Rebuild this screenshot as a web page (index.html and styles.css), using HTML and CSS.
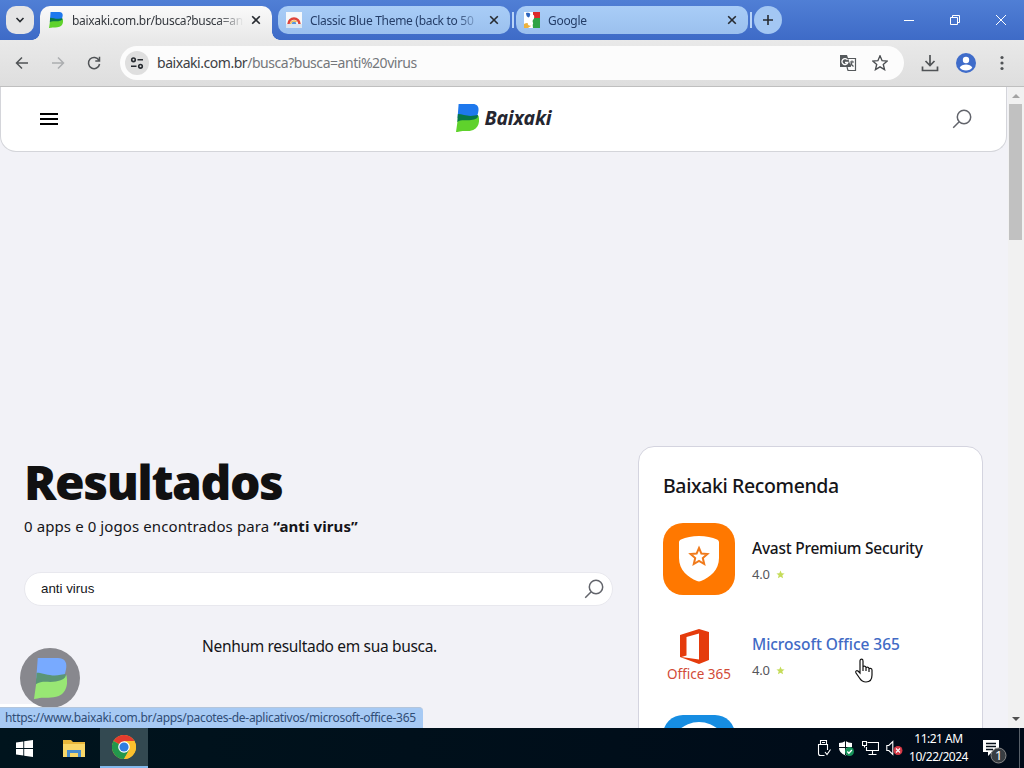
FILE: index.html
```html
<!DOCTYPE html>
<html lang="pt-BR">
<head>
<meta charset="utf-8">
<title>Baixaki - busca</title>
<link rel="stylesheet" href="styles.css">
</head>
<body>
<svg class="defs" width="0" height="0">
  <symbol id="logo" viewBox="0 0 22 28" preserveAspectRatio="none">
    <path class="logo-blue" d="M2.500 0H16c4 0 6 2.500 5.500 6.500-.3 2.500-.8 4-1.500 6L1.500 14z"/>
    <path class="logo-green" d="M1.500 17c4-3 8-1 13-2 3-.7 6-1.500 7-3.500 1.500 6.500 0 12-5 14.500-4 1.700-8 .8-11.500 1.200C3 27.500 2 28 0 28z"/>
    <path class="logo-dark" d="M1.800 10c5 0 9 3 16 1.500l3.200-.5c.8 3-2.500 4.500-6.500 5-5 1-9-1-13.300 2z"/>
  </symbol>
  <symbol id="search" viewBox="0 0 20 20">
    <circle cx="12" cy="8" r="6.700"/><path d="M7.200 12.800 1.200 18.800"/>
  </symbol>
  <symbol id="close" viewBox="0 0 10 10"><path d="M1.200 1.200l7.600 7.600M8.800 1.200 1.200 8.800"/></symbol>
  <symbol id="star" viewBox="0 0 20 20"><path d="M10 1l2.600 6.100 6.500.5-5 4.200 1.600 6.500L10 14.800l-5.700 3.500 1.600-6.500-5-4.200 6.500-.5z"/></symbol>
</svg>

<div class="tabstrip">
  <button class="tab-search"><svg class="line" width="10" height="10" viewBox="0 0 10 10"><path d="M1.500 3 5 6.500 8.500 3"/></svg></button>
  <div class="tab active">
    <svg class="favicon" width="16" height="16" viewBox="0 0 16 16"><use href="#logo" x="1" width="14" height="16"/></svg>
    <span class="tab-title">baixaki.com.br/busca?busca=an</span>
    <svg class="line" width="10" height="10"><use href="#close"/></svg>
  </div>
  <div class="tab">
    <svg class="favicon" width="16" height="16" viewBox="0 0 16 16"><path fill="#f5f8fb" d="M0 0h16v16H0z"/><path d="M2.500 12a5.500 5.500 0 0 1 11 0" fill="none" stroke="#df453b" stroke-width="2.500"/><path d="M4.500 12a3.500 3.500 0 0 1 6-2" fill="none" stroke="#f1b64a" stroke-width="1.500"/><circle cx="8" cy="12" r="2.300" fill="#5795dd"/><path fill="#d9e5f2" d="M0 12h16v4H0z"/></svg>
    <span class="tab-title">Classic Blue Theme (back to 50</span>
    <svg class="line" width="10" height="10"><use href="#close"/></svg>
  </div>
  <i class="tab-sep"></i>
  <div class="tab">
    <svg class="favicon" width="16" height="16" viewBox="0 0 16 16"><path fill="#fff" d="M0 0h16v16H0z"/><path fill="#dc2929" d="M9 0h7v6H9z"/><path fill="#2da344" d="M8 6h8v10H9z"/><path fill="#2c64bd" d="M2 1c3-1 5 0 4 3S2 5 2 1z"/><path fill="#edb23e" d="M0 12c3-2 6-1 7 2l-3 2H0z"/><path fill="#fff" d="M6 3c5-2 5 3 3 5s2 3-1 5-6-1-3-4z"/></svg>
    <span class="tab-title">Google</span>
    <svg class="line" width="10" height="10"><use href="#close"/></svg>
  </div>
  <i class="tab-sep"></i>
  <button class="new-tab"><svg class="line" width="12" height="12" viewBox="0 0 12 12"><path d="M6 1v10M1 6h10"/></svg></button>
  <div class="window-buttons">
    <svg width="12" height="12" viewBox="0 0 12 12"><path d="M1 6.500h10"/></svg>
    <svg width="12" height="12" viewBox="0 0 12 12"><path d="M1.500 3.500h7v7h-7zM3.500 3.500v-2h7v7h-2"/></svg>
    <svg width="12" height="12" viewBox="0 0 12 12"><path d="M1 1l10 10M11 1 1 11"/></svg>
  </div>
</div>

<div class="toolbar">
  <svg class="nav" width="16" height="16" viewBox="0 0 16 16"><path d="M14 8H3M8 2.500 2.500 8 8 13.500"/></svg>
  <svg class="nav off" width="16" height="16" viewBox="0 0 16 16"><path d="M2 8h11M8 2.500 13.500 8 8 13.500"/></svg>
  <svg class="nav" width="16" height="16" viewBox="0 0 16 16"><path d="M13 5.300A5.600 5.600 0 1 0 13.600 9M13.500 1.800V6H9.300"/></svg>
  <div class="omnibox">
    <span class="site-info"><svg class="line" width="14" height="14" viewBox="0 0 14 14"><circle cx="3.500" cy="3.800" r="1.800"/><path d="M7.500 3.800H13M1 10.300h5.500"/><circle cx="10.500" cy="10.300" r="1.800"/></svg></span>
    <span class="url">baixaki.com.br<span>/busca?busca=anti%20virus</span></span>
    <svg class="translate" width="18" height="18" viewBox="0 0 18 18"><path fill="#55595c" d="M1 1h7l1 3 3 9H1z"/><path d="M8.500 6a3 3 0 1 0 .3 2.500H6" fill="none" stroke="#fff" stroke-width="1.300"/><path d="M9 4.500h7.500v12H9l-1-3.500M11 8h4M13 6.500V8c0 2-1 3-2 4M11.500 9.500l3 3" fill="none" stroke="#55595c" stroke-width="1.200"/></svg>
    <svg class="bookmark" width="16" height="16"><use href="#star"/></svg>
  </div>
  <svg class="download" width="18" height="18" viewBox="0 0 18 18"><path d="M9 1v10M4.500 7 9 11.500 13.500 7M1.500 12.500v4h15v-4"/></svg>
  <svg class="profile" width="20" height="20" viewBox="0 0 20 20"><circle cx="10" cy="10" r="10" fill="#3f6cca"/><circle cx="10" cy="7" r="3.200" fill="#fff"/><path fill="#fff" d="M3.700 14.600c2-4 10.600-4 12.600 0-2 4-10.600 4-12.600 0z"/></svg>
  <svg class="kebab" width="4" height="16" viewBox="0 0 4 16"><circle cx="2" cy="2.500" r="1.600"/><circle cx="2" cy="8" r="1.600"/><circle cx="2" cy="13.500" r="1.600"/></svg>
</div>

<div class="viewport">
  <div class="page">
    <header class="site-header">
      <div class="menu"><i></i><i></i><i></i></div>
      <div class="brand"><svg width="23" height="28"><use href="#logo"/></svg><span>Baixaki</span></div>
      <svg class="search-icon" width="20" height="20"><use href="#search"/></svg>
    </header>
    <main class="content">
      <section class="results">
        <h1>Resultados</h1>
        <p class="count"><span>0 apps e 0 jogos encontrados para </span><b>“anti virus”</b></p>
        <div class="search-box"><span>anti virus</span><svg class="search-icon" width="20" height="20"><use href="#search"/></svg></div>
        <p class="empty">Nenhum resultado em sua busca.</p>
      </section>
      <aside class="recommended">
        <h2>Baixaki Recomenda</h2>
        <div class="app">
          <svg width="72" height="72" viewBox="0 0 72 72"><rect width="72" height="72" rx="20" fill="#ff7800"/><path fill="#fff" d="M36 13c7 0 13 1.500 18 3.500 1.300.6 2 1.500 2 3V35c0 12-9 19.500-18 23q-2 .8-4 0c-9-3.500-18-11-18-23V19.500c0-1.500.7-2.400 2-3C23 14.500 29 13 36 13z"/><path fill="none" stroke="#f07a1b" stroke-width="2" d="M36 25l2.400 5.600 6 .5-4.600 4 1.400 5.900-5.200-3.100-5.200 3.100 1.400-5.900-4.600-4 6-.5z"/></svg>
          <div class="app-info"><h3 class="avast">Avast Premium Security</h3><p>4.0 <svg class="rate" width="9" height="9"><use href="#star"/></svg></p></div>
        </div>
        <div class="app">
          <div class="office"><svg width="30" height="35" viewBox="0 0 30 35"><path fill="#e53b0c" fill-rule="evenodd" d="M0 6 19 0l10 3v28l-10 4L0 28zM6.500 8v18.500l-5 1.500L19 30.500v-26z"/></svg><span>Office 365</span></div>
          <div class="app-info"><h3 class="link">Microsoft Office 365</h3><p>4.0 <svg class="rate" width="9" height="9"><use href="#star"/></svg></p></div>
        </div>
        <div class="app">
          <svg width="72" height="72" viewBox="0 0 72 72"><rect width="72" height="72" rx="20" fill="#168de2"/><circle cx="36" cy="36" r="29" fill="#fff"/></svg>
        </div>
      </aside>
    </main>
    <div class="toast"></div>
    <div class="float-badge"><svg width="33" height="41"><use href="#logo"/></svg></div>
    <div class="status">https://www.baixaki.com.br/apps/pacotes-de-aplicativos/microsoft-office-365</div>
    <svg class="cursor" width="20" height="26" viewBox="0 0 20 26"><path d="M6 15V3c0-2.500 3-2.500 3 0v6.500c0-2 3-2 3 .3v.7c0-2 3-2 3 .3v.7c0-1.800 3-1.500 3 .5v5c0 4-2 7-6 7-3 0-5-1.500-6.500-4L2 15c-1-2 .8-3 2-2zM9 9.500V13M12 10.500V13M15 11.500V14"/></svg>
  </div>
  <div class="scrollbar"><i class="up"></i><div class="thumb"></div><i class="down"></i></div>
</div>

<div class="taskbar">
  <div class="task"><svg width="17" height="17" viewBox="0 0 17 17"><path fill="#fff" d="M0 2.500 7.300 1.400V8H0zM8.200 1.300 17 0v8H8.200zM0 8.900h7.300v6.600L0 14.500zM8.200 8.900H17V17l-8.800-1.300z"/></svg></div>
  <div class="task files"><svg width="22" height="19" viewBox="0 0 22 19"><path fill="#e8b73b" d="M0 1h8l2 2h12v15H0z"/><path fill="#f9d768" d="M0 5h22v13H0z"/><path fill="#4a8ccc" d="M4 11h14v7h-3v-4H7v4H4z"/></svg></div>
  <div class="task current"><svg width="24" height="24" viewBox="0 0 24 24"><circle cx="12" cy="12" r="12" fill="#fbc02d"/><path fill="#e33b2e" d="M12 12 1.600 6A12 12 0 0 1 22.400 6H12z"/><path fill="#23974c" d="M12 12 1.600 6A12 12 0 0 0 12 24l5.200-9z"/><path fill="#fbc02d" d="M12 6h10.400A12 12 0 0 1 12 24l5.200-9z"/><circle cx="12" cy="12" r="5.800" fill="#fff"/><circle cx="12" cy="12" r="4.600" fill="#2f7de1"/></svg></div>
  <div class="tray">
    <svg width="14" height="18" viewBox="0 0 14 18"><path class="w" d="M3.500 5V1.500h6V5M10.500 11V5.500h-9v9q0 2 2 2h4M8 13l2 2.500 3.500-5M5 3.500h3"/></svg>
    <svg width="17" height="17" viewBox="0 0 17 17"><path fill="#fff" d="M7.500 1q3 2 6.500 2v5q0 5-6.500 7.500Q1 13 1 8V3q3.500 0 6.500-2z"/><path stroke="#07101a" d="M7.500 1v14M1 7.500h13"/><circle cx="11.500" cy="11.500" r="4.500" fill="#16935a"/><path stroke="#fff" fill="none" stroke-width="1.300" d="M9.300 11.500l1.600 1.700 3-3.200"/></svg>
    <svg width="17" height="16" viewBox="0 0 17 16"><path class="w" d="M5.500 2.500h11v8h-12V7M.5 1.500h4v4h-4zM2.500 5.500v2M10.500 11v3M6.500 14.500h8"/></svg>
    <svg width="17" height="16" viewBox="0 0 17 16"><path class="w" d="M.8 5.500h2l4-4v13l-4-4h-2z"/><circle cx="12" cy="10.500" r="4.500" fill="#d53845"/><path class="w" d="M10 8.500l4 4M14 8.500l-4 4"/></svg>
  </div>
  <div class="clock"><span>11:21 AM</span><span>10/22/2024</span></div>
  <svg class="notify" width="25" height="25" viewBox="0 0 25 25"><path fill="#fff" d="M1 1h16v12h-7l-4 4v-4H1z"/><path stroke="#07101a" stroke-width="1.500" d="M4 4.500h10M4 7.500h10M4 10.500h7"/><circle cx="16.500" cy="16.500" r="7.500" fill="#383d42" stroke="#888" stroke-width="1"/><text x="13" y="21">1</text></svg>
  <i class="peek"></i>
</div>
</body>
</html>
```

FILE: styles.css
```css
* {
  box-sizing: border-box;
}

body {
  margin: 0;
  width: 1024px;
  height: 768px;
  overflow: hidden;
  display: flex;
  flex-direction: column;
  font-family: "Noto Sans", "Open Sans", sans-serif;
  color: #151519;
}

h1, h2, h3, p {
  margin: 0;
}

svg {
  flex: none;
  display: block;
}

button {
  border: 0;
  padding: 0;
}

.defs {
  position: absolute;
}

.logo-blue { fill: var(--logo-blue, #1e78ed); }
.logo-green { fill: var(--logo-green, #5fd22c); }
.logo-dark { fill: var(--logo-dark, #087747); }

.line {
  fill: none;
  stroke: #272b30;
  stroke-width: 1.6;
}

/* tabs */
.tabstrip {
  height: 40px;
  flex: none;
  display: flex;
  align-items: flex-start;
  padding: 6px 0 0 6px;
  background: linear-gradient(#507fd5, #3e6bc7);
}

.tab-search, .new-tab {
  width: 28px;
  height: 28px;
  display: flex;
  align-items: center;
  justify-content: center;
  border-radius: 10px;
  background: #e5e5e6;
}

.tab {
  width: 232px;
  height: 28px;
  display: flex;
  align-items: center;
  padding: 0 11px 0 8px;
  border-radius: 10px;
  background: linear-gradient(#a9cdf7, #9bc0ee);
  font-size: 12px;
  letter-spacing: -.3px;
  color: #253e68;
}

.tab.active {
  position: relative;
  height: 34px;
  margin: 0 6px;
  padding-bottom: 6px;
  border-radius: 10px 10px 0 0;
  background: linear-gradient(#fafafa, #e9e9e9);
  color: #34383e;
}

.tab.active::before, .tab.active::after {
  content: "";
  position: absolute;
  bottom: 0;
  left: -8px;
  width: 8px;
  height: 8px;
  background: radial-gradient(circle at 0 0, transparent 7.5px, #e9e9e9 8px);
}

.tab.active::after {
  left: auto;
  right: -8px;
  background: radial-gradient(circle at 100% 0, transparent 7.5px, #e9e9e9 8px);
}

.tab-title {
  flex: none;
  width: 172px;
  margin: 0 7px 0 8px;
  white-space: nowrap;
  -webkit-mask-image: linear-gradient(90deg, #000 146px, transparent);
}

.tab-sep {
  width: 2px;
  height: 16px;
  margin: 6px 2px;
  background: #b8d4f8;
}

.new-tab {
  border-radius: 50%;
  background: #a3c7f3;
}

.window-buttons {
  margin-left: auto;
  display: flex;
  gap: 34px;
  padding: 8px 17px 0 0;
  fill: none;
  stroke: #fff;
}

/* address bar */
.toolbar {
  height: 47px;
  flex: none;
  display: flex;
  align-items: center;
  padding: 0 20px 1px 14px;
  background: linear-gradient(#e9e9e9, #dedede);
  border-bottom: 1px solid #bfbfbf;
}

.nav {
  margin-right: 20px;
  fill: none;
  stroke: #505356;
  stroke-width: 1.5;
}

.nav.off {
  stroke: #acaeb0;
}

.omnibox {
  width: 784px;
  height: 34px;
  margin-left: -2px;
  display: flex;
  align-items: center;
  padding: 0 16px 0 5px;
  border-radius: 17px;
  background: #fcfcfc;
}

.site-info {
  width: 24px;
  height: 24px;
  display: flex;
  align-items: center;
  justify-content: center;
  border-radius: 50%;
  background: #dfdfdf;
}

.url {
  margin-left: 8px;
  font-size: 14px;
  letter-spacing: -.46px;
  color: #3d4044;
}

.url span {
  color: #74777b;
}

.translate {
  margin-left: auto;
}

.bookmark {
  margin-left: 15px;
  overflow: visible;
  fill: none;
  stroke: #4b4e51;
  stroke-width: 1.7;
}

.download {
  margin-left: 17px;
  fill: none;
  stroke: #505356;
  stroke-width: 1.7;
}

.profile {
  margin-left: 17px;
}

.kebab {
  margin-left: auto;
  fill: #505356;
}

/* page */
.viewport {
  height: 641px;
  flex: none;
  display: flex;
  overflow: hidden;
}

.page {
  position: relative;
  width: 1008px;
  overflow: hidden;
  background: #f2f2f7;
}

.site-header {
  width: 1007px;
  height: 65px;
  display: grid;
  grid-template-columns: 1fr auto 1fr;
  align-items: center;
  padding: 0 34px 1px 39px;
  background: #fff;
  border: 1px solid #d4d5da;
  border-top: 0;
  border-radius: 0 0 16px 16px;
}

.menu {
  display: grid;
  gap: 3px;
}

.menu i {
  width: 18px;
  height: 2px;
  background: #000;
}

.brand {
  display: flex;
  align-items: center;
  gap: 6px;
  padding: 0 5px 2px 0;
}

.brand span {
  font: italic bold 19.500px/24px "Noto Sans", sans-serif;
  letter-spacing: -.2px;
  color: #252630;
}

.search-icon {
  fill: none;
  stroke: #62646b;
  stroke-width: 1.5;
}

.site-header .search-icon {
  justify-self: end;
}

.content {
  display: grid;
  grid-template-columns: 589px 345px;
  gap: 25px;
  padding: 294px 0 0 24px;
}

.results {
  padding-top: 6px;
}

.results h1 {
  font: 900 48px/60px "Noto Sans", sans-serif;
  letter-spacing: -1.45px;
  color: #111;
}

.count {
  margin-top: 2px;
  font-size: 15px;
  line-height: 24px;
  letter-spacing: .1px;
  white-space: nowrap;
}

.search-box {
  height: 34px;
  margin-top: 34px;
  display: flex;
  align-items: center;
  justify-content: space-between;
  padding: 0 8px 0 16px;
  border: 1px solid #e8e8ee;
  border-radius: 17px;
  background: #fff;
  font: 13.333px "Liberation Sans", Arial, sans-serif;
}

.search-box span {
  padding-bottom: 2px;
}

.empty {
  margin-top: 28px;
  padding-left: 2px;
  text-align: center;
  font-size: 15.500px;
  line-height: 24px;
  letter-spacing: -.33px;
}

.recommended {
  height: 400px;
  padding: 24px;
  border: 1px solid #d4d4df;
  border-radius: 16px;
  background: #fff;
}

.recommended h2 {
  font-size: 19.500px;
  line-height: 30px;
  font-weight: 500;
  letter-spacing: -.38px;
}

.app {
  height: 72px;
  margin-top: 22px;
  display: flex;
  gap: 17px;
}

.app + .app {
  margin-top: 24px;
}

.app-info {
  padding-top: 13px;
}

.app h3 {
  font-size: 15.500px;
  line-height: 24px;
  font-weight: 500;
  letter-spacing: -.05px;
  white-space: nowrap;
}

.app .avast {
  letter-spacing: -.25px;
}

.app .link {
  color: #416ac5;
}

.app p {
  display: flex;
  align-items: center;
  gap: 6px;
  margin-top: 4px;
  font-size: 13px;
  line-height: 20px;
  letter-spacing: -.2px;
  color: #55565b;
}

.rate {
  fill: #c5dc59;
}

.office {
  width: 72px;
  display: flex;
  flex-direction: column;
  align-items: center;
  padding-top: 10px;
  color: #d24b37;
}

.office svg {
  margin-right: 8px;
}

.office span {
  font-size: 13.500px;
  line-height: 20px;
  white-space: nowrap;
}

.toast {
  position: absolute;
  left: 0;
  bottom: 0;
  width: 60px;
  height: 24px;
  background: #fff;
}

.float-badge {
  --logo-blue: #78aaff;
  --logo-green: #98e774;
  --logo-dark: #5b9576;
  position: absolute;
  left: 20px;
  top: 561px;
  width: 60px;
  height: 60px;
  display: flex;
  align-items: center;
  justify-content: center;
  border-radius: 50%;
  background: #88888e;
}

.status {
  position: absolute;
  left: 0;
  bottom: 0;
  width: 423px;
  height: 21px;
  padding-left: 5px;
  border-top: 1px solid #b4c6dc;
  border-radius: 0 4px 0 0;
  background: #a7caf4;
  font-size: 12px;
  line-height: 19px;
  letter-spacing: -.31px;
  white-space: nowrap;
  color: #304d76;
}

.cursor {
  position: absolute;
  left: 854px;
  top: 571px;
  fill: #fff;
  stroke: #111;
  stroke-width: 1.2;
}

.scrollbar {
  width: 16px;
  display: flex;
  flex-direction: column;
  align-items: center;
  background: #f1f1f1;
}

.thumb {
  width: 13px;
  height: 136px;
  margin: 6px 1px 0 0;
  background: #c1c1c1;
}

.up, .down {
  border: 4px solid transparent;
  border-top: 0;
  border-bottom: 4px solid #a3a3a3;
  margin: 7px 1px 0 0;
}

.down {
  margin: auto 1px 7px 0;
  border-top: 4px solid #505050;
  border-bottom: 0;
}

/* taskbar */
.taskbar {
  height: 40px;
  flex: none;
  display: flex;
  background: linear-gradient(90deg, #00141d, #000a18);
  color: #fff;
}

.task {
  width: 48px;
  display: flex;
  align-items: center;
  justify-content: center;
}

.files {
  width: 52px;
}

.current {
  background: #334951;
  border-bottom: 2px solid #83b9ed;
}

.tray {
  margin-left: auto;
  display: flex;
  align-items: center;
  gap: 7px;
  margin-right: -2px;
}

.w {
  fill: none;
  stroke: #fff;
  stroke-width: 1.1;
}

.clock {
  width: 74px;
  display: flex;
  flex-direction: column;
  align-items: center;
  padding: 2px 0 0 1px;
  font-size: 12px;
  line-height: 18px;
  letter-spacing: -.5px;
}

.notify {
  margin: 11px 0 0 7px;
  font-size: 13px;
  fill: #fff;
}

.peek {
  width: 1px;
  margin: 0 4px 0 12px;
  background: #586069;
}
```
